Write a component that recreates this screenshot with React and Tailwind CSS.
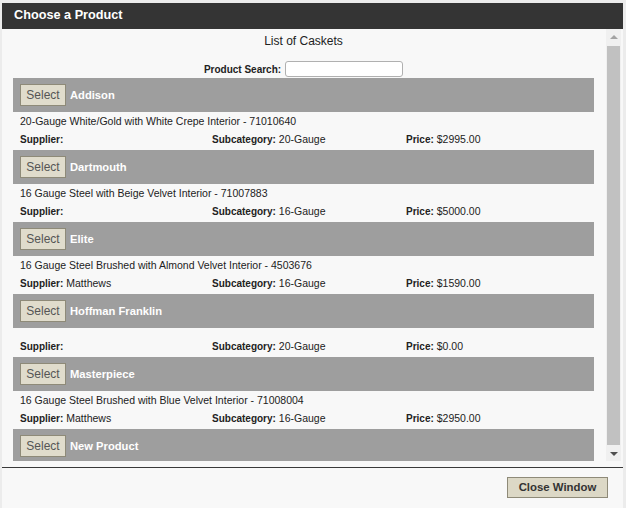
import React from "react";

const products = [
  {
    name: "Addison",
    description: "20-Gauge White/Gold with White Crepe Interior - 71010640",
    supplier: "",
    subcategory: "20-Gauge",
    price: "$2995.00",
  },
  {
    name: "Dartmouth",
    description: "16 Gauge Steel with Beige Velvet Interior - 71007883",
    supplier: "",
    subcategory: "16-Gauge",
    price: "$5000.00",
  },
  {
    name: "Elite",
    description: "16 Gauge Steel Brushed with Almond Velvet Interior - 4503676",
    supplier: "Matthews",
    subcategory: "16-Gauge",
    price: "$1590.00",
  },
  {
    name: "Hoffman Franklin",
    description: "",
    supplier: "",
    subcategory: "20-Gauge",
    price: "$0.00",
  },
  {
    name: "Masterpiece",
    description: "16 Gauge Steel Brushed with Blue Velvet Interior - 71008004",
    supplier: "Matthews",
    subcategory: "16-Gauge",
    price: "$2950.00",
  },
  {
    name: "New Product",
    description: "",
    supplier: "",
    subcategory: "",
    price: "",
    hidden: true, // details scrolled out of view
  },
];

function ProductBlock({ product }) {
  return (
    <div className="mb-[2px]">
      <div className="flex items-center h-[34px] bg-[#9e9e9e] pl-[7px]">
        <button className="h-[22px] w-[46px] bg-[#e0dccc] border border-[#8e8a78] text-[12px] text-[#555] leading-none">
          Select
        </button>
        <span className="ml-[4px] text-[11.2px] font-bold text-white">
          {product.name}
        </span>
      </div>
      {!product.hidden && (
        <>
          {product.description ? (
            <div className="flex items-center h-[18px] pt-[2px] pl-[7px] text-[10.5px] text-[#222]">
              {product.description}
            </div>
          ) : (
            <div className="h-[9px]" />
          )}
          <div className="grid grid-cols-[192px_194px_1fr] items-center h-[18px] pt-[2px] pl-[7px] text-[10.5px] text-[#222]">
            <div>
              <span className="font-bold text-[10px]">Supplier:</span>{" "}
              {product.supplier}
            </div>
            <div>
              <span className="font-bold text-[10px]">Subcategory:</span>{" "}
              {product.subcategory}
            </div>
            <div>
              <span className="font-bold text-[10px]">Price:</span>{" "}
              {product.price}
            </div>
          </div>
        </>
      )}
    </div>
  );
}

function ScrollBar() {
  return (
    <div className="w-[15px] bg-[#f0f0f0] flex flex-col items-center">
      <div className="h-[15px] w-full flex items-center justify-center">
        <div className="w-0 h-0 border-x-[4px] border-x-transparent border-b-[4px] border-b-[#a3a3a3]" />
      </div>
      <div className="flex-1 w-[13px] mt-[2px] mb-[1px] bg-[#c1c1c1]" />
      <div className="h-[15px] w-full flex items-center justify-center">
        <div className="w-0 h-0 border-x-[4px] border-x-transparent border-t-[4px] border-t-[#505050]" />
      </div>
    </div>
  );
}

function App() {
  return (
    <div
      className="w-[626px] h-[508px] bg-[#ececec] pl-[2px] pt-[3px] pr-[3px] overflow-hidden"
      style={{ fontFamily: '"Liberation Sans", Arial, sans-serif' }}
    >
      <div className="flex flex-col h-[505px] bg-[#f8f8f8]">
        <div className="h-[26px] bg-[#343434] flex items-center pl-[12px]">
          <span className="text-[12.7px] font-bold text-white">
            Choose a Product
          </span>
        </div>
        <div className="flex h-[432px]">
          <div className="flex-1 overflow-hidden pl-[11px] pr-[12px]">
            <div className="pt-[5px] text-center text-[12px] leading-[14px] text-[#222]">
              List of Caskets
            </div>
            <div className="mt-[13px] mb-[1px] flex items-center justify-center gap-[4px] h-[16px]">
              <span className="text-[10px] font-bold text-[#222]">
                Product Search:
              </span>
              <input
                type="text"
                className="w-[118px] h-[16px] bg-white border border-[#b0b0b0] rounded-[3px] outline-none"
              />
            </div>
            {products.map((product) => (
              <ProductBlock key={product.name} product={product} />
            ))}
          </div>
          <ScrollBar />
          <div className="w-[2px]" />
        </div>
        <div className="h-[6px]" />
        <div className="h-px bg-[#3a3a3a]" />
        <div className="flex justify-end pt-[9px] pr-[15px]">
          <button className="h-[21px] w-[101px] bg-[#dcd8c6] border border-[#8e8a78] text-[11.4px] font-bold text-[#333] leading-none">
            Close Window
          </button>
        </div>
      </div>
    </div>
  );
}

export default App;
